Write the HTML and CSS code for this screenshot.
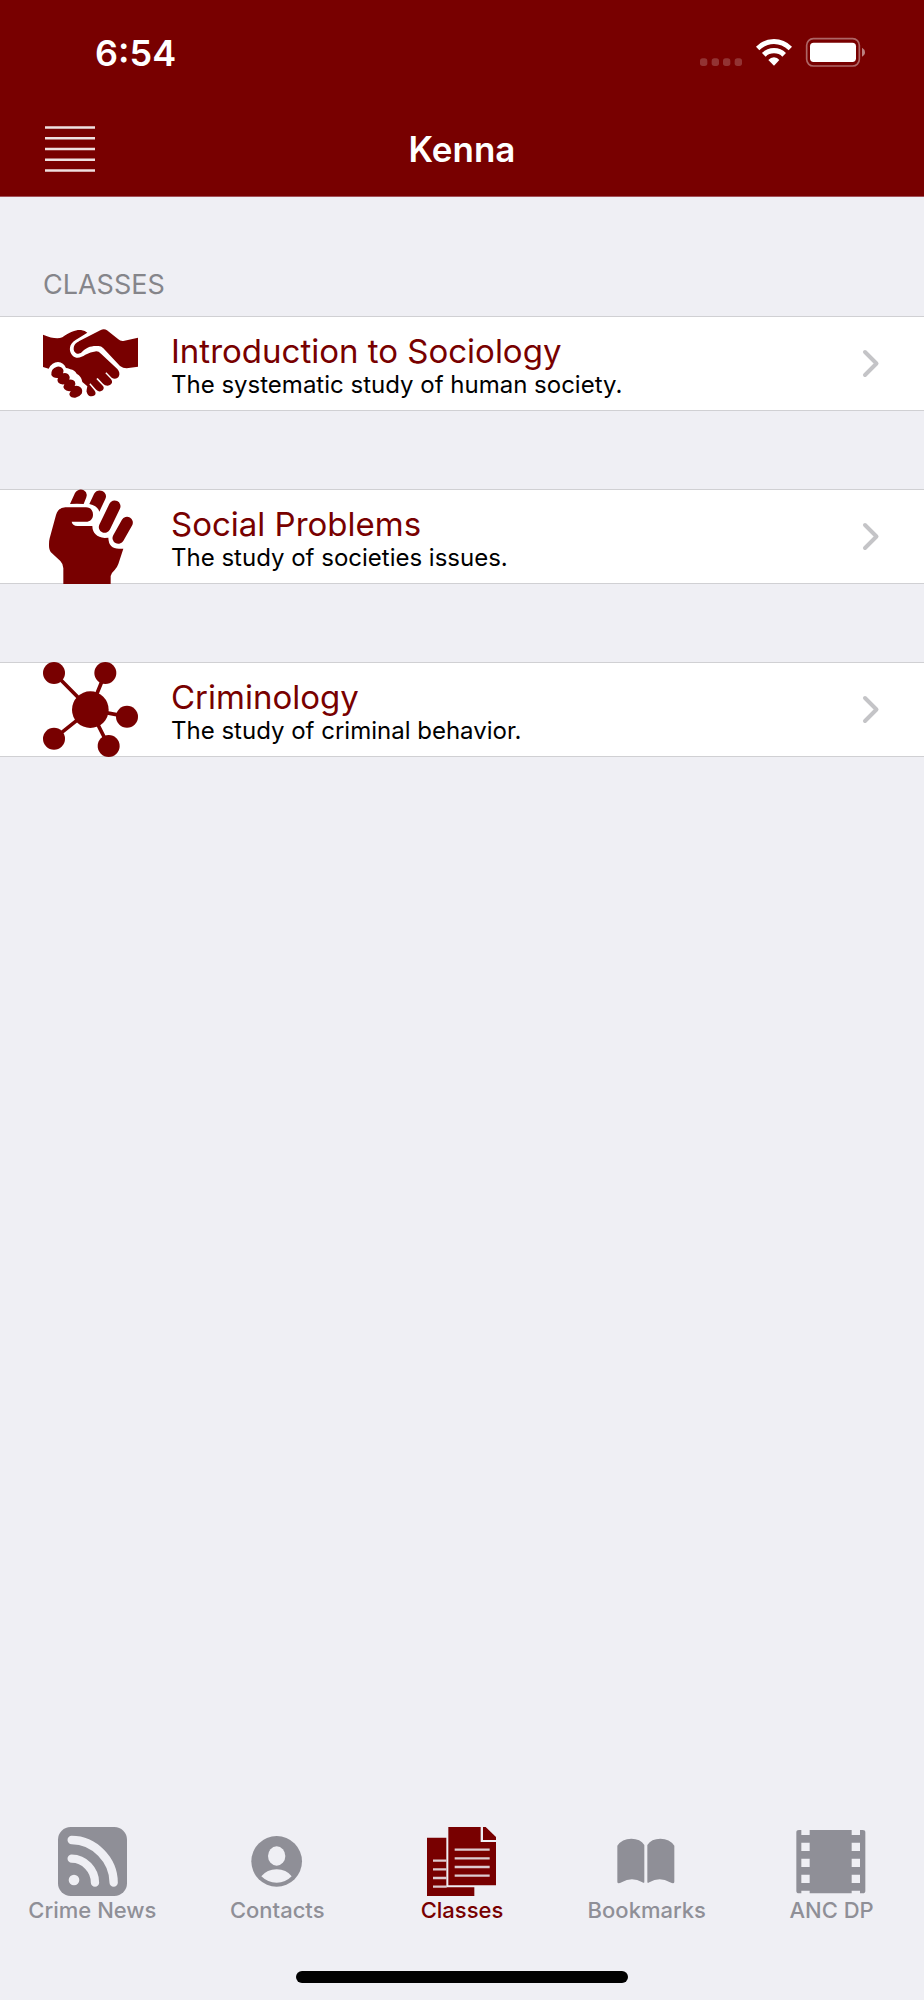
FILE: index.html
```html
<!DOCTYPE html>
<html lang="en">
<head>
<meta charset="utf-8">
<meta name="viewport" content="width=device-width, initial-scale=1">
<title>Kenna</title>
<link rel="stylesheet" href="styles.css">
</head>
<body>
<header class="header">
  <div class="status">
    <span class="time">6:54</span>
    <svg class="indicators" viewBox="120 114 495 87" aria-hidden="true">
      <g fill="#fff" fill-opacity=".2">
        <rect x="120" y="175" width="22" height="23" rx="8"/><rect x="155" y="175" width="22" height="23" rx="8"/><rect x="189" y="175" width="22" height="23" rx="8"/><rect x="224" y="175" width="22" height="23" rx="8"/>
      </g>
      <g fill="#fff">
        <path d="M288 140Q311 117 342 117T396 140L386 151Q366 132 342 132T298 151Z"/>
        <path d="M306 159Q321 144 342 144T378 159L367 170Q357 160 342 160T317 170Z"/>
        <path d="M325 180Q332 172 342 172T358 180L342 197Z"/>
        <rect x="450" y="128" width="138" height="58" rx="11"/>
      </g>
      <rect x="440" y="116" width="158" height="82" rx="20" fill="none" stroke="#fff" stroke-opacity=".4" stroke-width="5"/>
      <path d="M606 143Q615 148 615 157T606 170Z" fill="#fff" fill-opacity=".5"/>
    </svg>
  </div>
  <div class="navbar">
    <button class="menu" type="button" aria-label="Menu">
      <svg viewBox="0 0 50 46" aria-hidden="true"><path d="M0 1.5H50M0 12.2H50M0 23H50M0 33.8H50M0 44.5H50" stroke="#fff" stroke-opacity=".88" stroke-width="2.4"/></svg>
    </button>
    <h1 class="title">Kenna</h1>
  </div>
</header>
<main class="content">
  <h2 class="section">CLASSES</h2>
  <nav class="list" aria-label="Classes">
    <a class="row" href="#sociology">
      <svg class="row-icon" viewBox="130 198 285 285" aria-hidden="true">
        <path d="M130 254Q168 270 188 262C212 244 232 238 244 240Q257 242 263 248L229 269C206 282 207 304 219 317C231 328 245 322 257 314Q272 306 290 304Q297 304 304 311L353 357Q362 367 358 378C354 387 343 388 336 383L320 367L317 370L333 386Q341 395 334 403C326 410 316 407 310 401L294 384L290 387L308 406Q316 414 309 421C302 427 293 424 288 418L272 400L269 403L284 421Q291 430 285 436C277 441 266 439 263 431Q259 424 261 419L263 409L248 396Q246 379 231 371Q225 360 212 358Q203 354 199 354Q192 337 175 336Q157 336 147 356L130 351Z"/>
        <path d="M222 297C222 283 231 278 239 273L302 241Q313 235 322 241L356 268Q362 274 371 273L415 263V350L381 355Q370 355 361 348L311 295Q303 286 293 288C273 287 259 293 246 307C235 317 222 308 222 297Z"/>
        <path d="M172 350Q184 347 190 357Q194 365 190 370Q201 367 207 374Q213 381 209 389Q219 387 225 394Q229 401 225 408Q237 406 244 413Q250 420 246 431Q240 440 227 443Q215 444 211 438Q207 431 213 423Q200 425 194 417Q189 410 194 403Q181 405 175 397Q171 391 175 384Q160 385 155 375Q153 356 172 350Z"/>
      </svg>
      <span class="row-text"><span class="row-title">Introduction to Sociology</span><span class="row-sub">The systematic study of human society.</span></span>
      <svg class="chevron" viewBox="0 0 16 27" aria-hidden="true"><path d="M2 2L13.500 13.500L2 25"/></svg>
    </a>
    <a class="row" href="#problems">
      <svg class="row-icon" viewBox="130 56 285 285" aria-hidden="true">
        <path d="M211 101L226 68C234 54 252 54 259 66Q263 74 260 81L252 101Q232 99 211 101Z"/>
        <path d="M269 101L283 71C290 58 306 58 315 67Q322 76 317 86L299 124Q294 106 269 101Z"/>
        <path d="M191 341V294Q191 281 182 272L157 249Q147 240 148 222Q148 211 150 204L169 134Q176 111 197 111H259C273 111 280 121 280 133C280 146 271 154 259 154H216Q218 166 233 167H278Q279 199 315 203L326 202Q327 235 358 235H371L356 281Q353 290 345 299Q334 309 333 317V341Z"/>
        <path d="M315 170L345 108M356 203L382 157" fill="none" stroke="#780000" stroke-width="35" stroke-linecap="round"/>
      </svg>
      <span class="row-text"><span class="row-title">Social Problems</span><span class="row-sub">The study of societies issues.</span></span>
      <svg class="chevron" viewBox="0 0 16 27" aria-hidden="true"><path d="M2 2L13.500 13.500L2 25"/></svg>
    </a>
    <a class="row" href="#criminology">
      <svg class="row-icon" viewBox="130 65 285 285" aria-hidden="true">
        <path d="M163 98L272 208L317 98M382 229L272 208L327 317M272 208L163 295" fill="none" stroke="#780000" stroke-width="11"/>
        <circle cx="163" cy="98" r="33"/><circle cx="317" cy="98" r="33"/><circle cx="382" cy="229" r="33"/><circle cx="327" cy="317" r="33"/><circle cx="163" cy="295" r="33"/><circle cx="272" cy="208" r="55"/>
      </svg>
      <span class="row-text"><span class="row-title">Criminology</span><span class="row-sub">The study of criminal behavior.</span></span>
      <svg class="chevron" viewBox="0 0 16 27" aria-hidden="true"><path d="M2 2L13.500 13.500L2 25"/></svg>
    </a>
  </nav>
</main>
<footer class="footer">
  <nav class="tabs" aria-label="Sections">
    <a class="tab" href="#news">
      <svg viewBox="175 82 207 207" aria-hidden="true"><rect x="175" y="82" width="207" height="207" rx="38"/><g fill="none" stroke="#efeff4" stroke-width="25" stroke-linecap="round"><path d="M216 121C283 121 342 180 342 249"/><path d="M216 177C254 177 286 211 286 249"/></g><circle cx="223" cy="241" r="16" fill="#efeff4"/></svg>
      <span>Crime News</span>
    </a>
    <a class="tab" href="#contacts">
      <svg viewBox="728 80 207 207" aria-hidden="true"><circle cx="829" cy="183" r="76"/><g fill="#efeff4"><ellipse cx="829" cy="167" rx="26" ry="29"/><path d="M783 228Q800 207 829 207T874 228Q856 247 829 247T783 228Z"/></g></svg>
      <span>Contacts</span>
    </a>
    <a class="tab active" href="#classes" aria-current="page">
      <svg viewBox="231 81 207 207" aria-hidden="true"><path d="M231 113H289V262H373V288H231Z"/><path d="M295 81H392V126H438V256H295Z"/><path d="M399 81H407L438 111V120H399Z"/><path d="M314 149H419M314 175H419M314 201H419M314 227H419M249 182H289M249 208H289M249 234H289M249 260H290" fill="none" stroke="#efeff4" stroke-opacity=".85" stroke-width="7"/></svg>
      <span>Classes</span>
    </a>
    <a class="tab" href="#bookmarks">
      <svg viewBox="95 80 207 207" aria-hidden="true"><path d="M111 136Q125 115 153 115Q180 115 192 134V244Q192 250 186 246Q155 228 124 246Q111 253 111 244Z"/><path d="M201 134Q213 115 240 115Q268 115 282 136V244Q282 253 269 246Q238 228 207 246Q201 250 201 244Z"/></svg>
      <span>Bookmarks</span>
    </a>
    <a class="tab" href="#anc">
      <svg viewBox="650 81 207 207" aria-hidden="true"><path fill-rule="evenodd" d="M648 97Q648 90 656 90H663V105H688V90H814V105H839V90H847Q855 90 855 97V273Q855 280 847 280H839V272H814V280H688V272H663V280H656Q648 280 648 273ZM663 128V153H688V128ZM663 176V201H688V176ZM663 224V249H688V224ZM814 128V153H839V128ZM814 176V201H839V176ZM814 224V249H839V224Z"/></svg>
      <span>ANC DP</span>
    </a>
  </nav>
  <div class="home-bar"></div>
</footer>
</body>
</html>
```

FILE: styles.css
```css
* {
  box-sizing: border-box;
}

body {
  display: flex;
  flex-direction: column;
  min-height: 100vh;
  margin: 0;
  background: #efeff4;
  color: #000;
  font-family: Inter, "Liberation Sans", sans-serif;
}

a {
  color: inherit;
  text-decoration: none;
}

svg {
  display: block;
  flex: none;
  overflow: visible;
}

.header {
  background: #780000;
  color: #fff;
  border-bottom: 1px solid #a25058;
}

.status {
  display: flex;
  justify-content: space-between;
  align-items: center;
  height: 105px;
  padding: 0 59px 0 95px;
}

.time {
  font-size: 36px;
  font-weight: 600;
  line-height: 44px;
}

.indicators {
  width: 165px;
  height: 29px;
}

.navbar {
  display: grid;
  grid-template-columns: 1fr auto 1fr;
  align-items: center;
  height: 91px;
  padding: 0 45px 4px;
}

.menu {
  justify-self: start;
  padding: 0;
  border: 0;
  background: none;
}

.menu svg {
  width: 50px;
  height: 46px;
}

.title {
  margin: 0;
  font-size: 35px;
  font-weight: 600;
  line-height: 44px;
}

.content {
  flex: 1;
}

.section {
  margin: 0;
  padding: 71px 43px 14px;
  color: #85858a;
  font-size: 27px;
  font-weight: 400;
  line-height: 34px;
}

.list {
  display: flex;
  flex-direction: column;
  gap: 78px;
}

.row {
  display: flex;
  align-items: center;
  padding: 0 45px 0 43px;
  background: #fff;
  box-shadow: inset 0 1px #d0d0d3, inset 0 -1px #d0d0d3;
}

.row-icon {
  width: 95px;
  height: 95px;
  fill: #780000;
}

.row-text {
  display: flex;
  flex: 1;
  flex-direction: column;
  padding: 6px 0 0 33px;
}

.row-title {
  color: #780000;
  font-size: 33px;
  line-height: 36px;
}

.row-sub {
  font-size: 24px;
  line-height: 32px;
}

.chevron {
  width: 16px;
  height: 27px;
  fill: none;
  stroke: #c4c4c7;
  stroke-width: 4;
  stroke-linecap: round;
  stroke-linejoin: round;
}

.footer {
  padding-bottom: 17px;
}

.tabs {
  display: grid;
  grid-template-columns: repeat(5, 1fr);
  padding-bottom: 47px;
}

.tab {
  display: flex;
  flex-direction: column;
  align-items: center;
  color: #8f8f97;
  font-size: 22px;
  font-weight: 500;
  line-height: 28px;
}

.tab svg {
  width: 69px;
  height: 69px;
  fill: currentColor;
}

.tab.active {
  color: #780000;
}

.home-bar {
  width: 36%;
  height: 12px;
  margin: 0 auto;
  border-radius: 6px;
  background: #000;
}
```
